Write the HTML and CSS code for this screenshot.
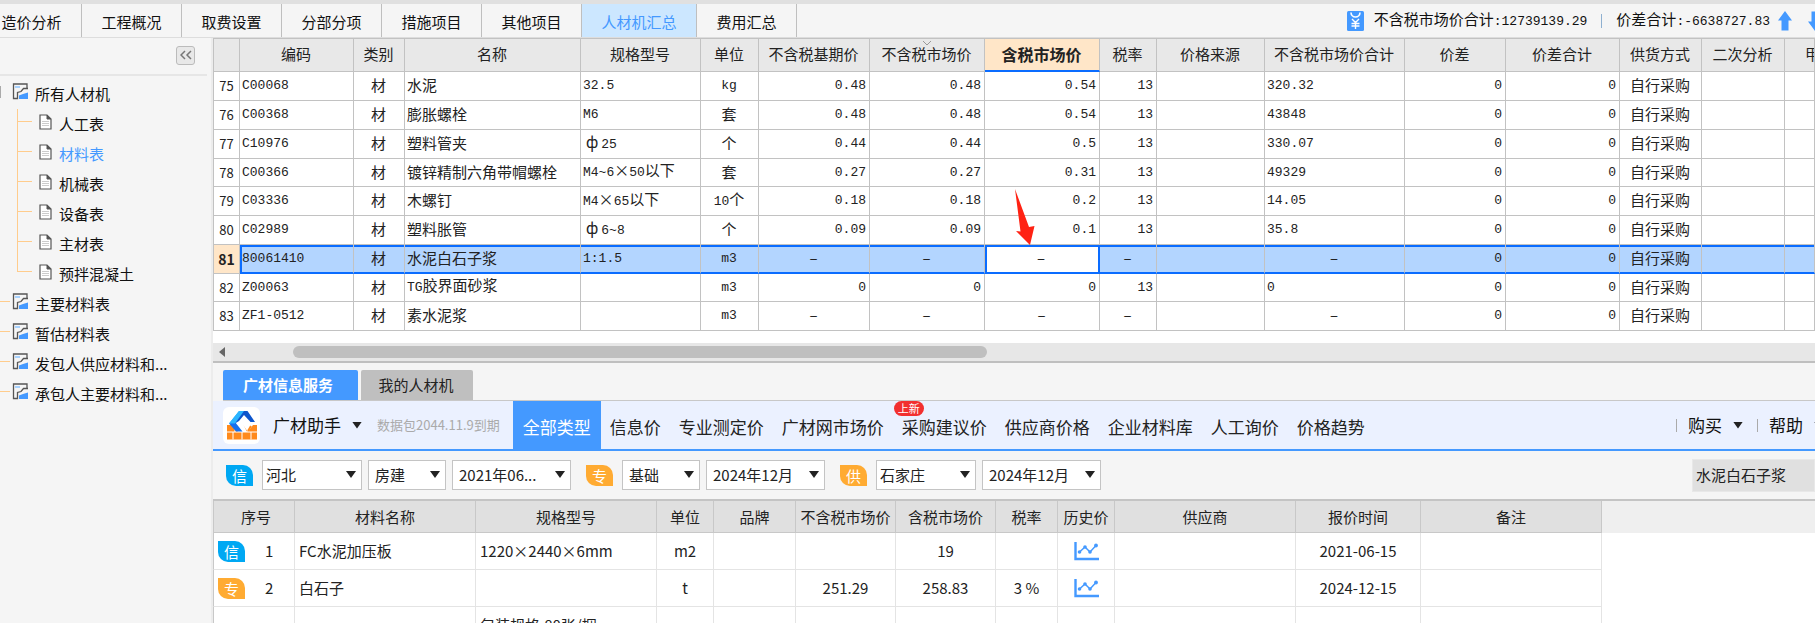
FILE: index.html
```html
<!DOCTYPE html>
<html lang="zh-CN">
<head>
  <meta charset="UTF-8">
  <meta name="viewport" content="width=device-width, initial-scale=1.0">
  <title>人材机汇总</title>
  <link rel="stylesheet" href="styles.css">
</head>
<body>
  <svg class="defs" aria-hidden="true">
    <symbol id="icon-group" viewBox="0 0 17 17">
      <path d="M4 15.500H1.500V1H15V5" fill="none" stroke="#555" stroke-width="1.300"/>
      <path d="M3 4h5" stroke="#8cc4ff" stroke-width="1.500"/>
      <path d="M16 5.500H11.500L9 8.500L5.500 9.500V15.500H4" fill="none" stroke="#555" stroke-width="1.300"/>
      <path d="M7 16V12.500L11 11L16 9.500V16Z" fill="#4499ff"/>
    </symbol>
    <symbol id="icon-file" viewBox="0 0 13 16">
      <path d="M1 1H8L12 5V15H1Z" fill="#fff" stroke="#555" stroke-width="1.200"/>
      <path d="M8 1V5H12Z" fill="#555" stroke="#555"/>
      <path d="M3 7.500h7M3 9.500h7M3 11.500h7" stroke="#ccc"/>
    </symbol>
    <symbol id="icon-chart" viewBox="0 0 25 19">
      <path d="M1.500 0V17H25" fill="none" stroke="#4499ff" stroke-width="2.400"/>
      <path d="M5.500 10L11 5L16 10L22 3.500" fill="none" stroke="#4499ff" stroke-width="1.500"/>
      <g fill="#4499ff"><circle cx="5.500" cy="10" r="1.800"/><circle cx="11" cy="5" r="1.800"/><circle cx="16" cy="10" r="1.800"/><circle cx="22" cy="3.500" r="1.900"/></g>
    </symbol>
    <symbol id="icon-up" viewBox="0 0 14 20">
      <path d="M7 0L14 9.500H10.500V19.500H3.500V9.500H0Z" fill="#4499ff"/>
    </symbol>
  </svg>

  <header class="topbar">
    <nav class="main-tabs">
      <button>造价分析</button>
      <button>工程概况</button>
      <button>取费设置</button>
      <button>分部分项</button>
      <button>措施项目</button>
      <button>其他项目</button>
      <button class="active">人材机汇总</button>
      <button>费用汇总</button>
    </nav>
    <div class="summary">
      <svg width="17" height="20" viewBox="0 0 17 20"><rect width="17" height="20" rx="1.500" fill="#4499ff"/><path d="M4 1.500A4.500 4.500 0 0 0 13 1.500" fill="none" stroke="#fff" stroke-width="1.600"/><path d="M5 8L8.500 11.500L12 8M8.500 11.500V18M4.500 12.500H12.500M4.500 15H12.500" fill="none" stroke="#fff" stroke-width="1.400"/></svg>
      <span>不含税市场价合计<span class="mono">:12739139.29</span></span>
      <i class="sep"></i>
      <span>价差合计<span class="mono">:-6638727.83</span></span>
      <button class="move" aria-label="上移"><svg width="14" height="20"><use href="#icon-up"/></svg></button>
      <button class="move down" aria-label="下移"><svg width="14" height="20"><use href="#icon-up"/></svg></button>
    </div>
  </header>

  <div class="workspace">
    <aside class="sidebar">
      <div class="side-head">
        <button class="collapse" aria-label="收起"><svg width="12" height="10" viewBox="0 0 12 10"><path d="M5 1L1 5L5 9M11 1L7 5L11 9" fill="none" stroke="#777" stroke-width="1.500"/></svg></button>
      </div>
      <ul class="tree">
        <li class="root open"><a href="#"><svg width="17" height="17"><use href="#icon-group"/></svg>所有人材机</a>
          <ul>
            <li><a href="#"><svg width="13" height="16"><use href="#icon-file"/></svg>人工表</a></li>
            <li class="current"><a href="#"><svg width="13" height="16"><use href="#icon-file"/></svg>材料表</a></li>
            <li><a href="#"><svg width="13" height="16"><use href="#icon-file"/></svg>机械表</a></li>
            <li><a href="#"><svg width="13" height="16"><use href="#icon-file"/></svg>设备表</a></li>
            <li><a href="#"><svg width="13" height="16"><use href="#icon-file"/></svg>主材表</a></li>
            <li><a href="#"><svg width="13" height="16"><use href="#icon-file"/></svg>预拌混凝土</a></li>
          </ul>
        </li>
        <li class="root"><a href="#"><svg width="17" height="17"><use href="#icon-group"/></svg>主要材料表</a></li>
        <li class="root"><a href="#"><svg width="17" height="17"><use href="#icon-group"/></svg>暂估材料表</a></li>
        <li class="root"><a href="#"><svg width="17" height="17"><use href="#icon-group"/></svg>发包人供应材料和...</a></li>
        <li class="root"><a href="#"><svg width="17" height="17"><use href="#icon-group"/></svg>承包人主要材料和...</a></li>
      </ul>
    </aside>

    <main class="content">
      <section class="grid-wrap">
        <table class="grid">
          <colgroup>
            <col class="g-idx"><col class="g-code"><col class="g-type"><col class="g-name"><col class="g-spec"><col class="g-unit"><col class="g-base"><col class="g-price"><col class="g-price"><col class="g-rate"><col class="g-src"><col class="g-total"><col class="g-diff"><col class="g-dsum"><col class="g-mode"><col class="g-again"><col>
          </colgroup>
          <thead>
            <tr>
              <th></th><th>编码</th><th>类别</th><th>名称</th><th>规格型号</th><th>单位</th><th>不含税基期价</th>
              <th class="sorted">不含税市场价<svg width="10" height="6" viewBox="0 0 10 6"><path d="M1 1L5 5L9 1" fill="none" stroke="#999"/></svg></th>
              <th class="focus">含税市场价</th><th>税率</th><th>价格来源</th><th>不含税市场价合计</th><th>价差</th><th>价差合计</th><th>供货方式</th><th>二次分析</th><th class="cut">甲</th>
            </tr>
          </thead>
          <tbody>
            <tr><th>75</th><td class="l n">C00068</td><td>材</td><td class="l">水泥</td><td class="l n">32.5</td><td class="n">kg</td><td class="r n">0.48</td><td class="r n">0.48</td><td class="r n">0.54</td><td class="r n">13</td><td></td><td class="l n">320.32</td><td class="r n">0</td><td class="r n">0</td><td>自行采购</td><td></td><td></td></tr>
            <tr><th>76</th><td class="l n">C00368</td><td>材</td><td class="l">膨胀螺栓</td><td class="l n">M6</td><td>套</td><td class="r n">0.48</td><td class="r n">0.48</td><td class="r n">0.54</td><td class="r n">13</td><td></td><td class="l n">43848</td><td class="r n">0</td><td class="r n">0</td><td>自行采购</td><td></td><td></td></tr>
            <tr><th>77</th><td class="l n">C10976</td><td>材</td><td class="l">塑料管夹</td><td class="l"><span class="phi">ф</span><span class="mono">25</span></td><td>个</td><td class="r n">0.44</td><td class="r n">0.44</td><td class="r n">0.5</td><td class="r n">13</td><td></td><td class="l n">330.07</td><td class="r n">0</td><td class="r n">0</td><td>自行采购</td><td></td><td></td></tr>
            <tr><th>78</th><td class="l n">C00366</td><td>材</td><td class="l">镀锌精制六角带帽螺栓</td><td class="l"><span class="mono">M4~6</span>×<span class="mono">50</span>以下</td><td>套</td><td class="r n">0.27</td><td class="r n">0.27</td><td class="r n">0.31</td><td class="r n">13</td><td></td><td class="l n">49329</td><td class="r n">0</td><td class="r n">0</td><td>自行采购</td><td></td><td></td></tr>
            <tr><th>79</th><td class="l n">C03336</td><td>材</td><td class="l">木螺钉</td><td class="l"><span class="mono">M4</span>×<span class="mono">65</span>以下</td><td><span class="mono">10</span>个</td><td class="r n">0.18</td><td class="r n">0.18</td><td class="r n">0.2</td><td class="r n">13</td><td></td><td class="l n">14.05</td><td class="r n">0</td><td class="r n">0</td><td>自行采购</td><td></td><td></td></tr>
            <tr><th>80</th><td class="l n">C02989</td><td>材</td><td class="l">塑料胀管</td><td class="l"><span class="phi">ф</span><span class="mono">6~8</span></td><td>个</td><td class="r n">0.09</td><td class="r n">0.09</td><td class="r n">0.1</td><td class="r n">13</td><td></td><td class="l n">35.8</td><td class="r n">0</td><td class="r n">0</td><td>自行采购</td><td></td><td></td></tr>
            <tr class="selected"><th>81</th><td class="l n">80061410</td><td>材</td><td class="l">水泥白石子浆</td><td class="l n">1:1.5</td><td class="n">m3</td><td>–</td><td>–</td><td class="editing">–<svg class="pointer" width="20" height="56" viewBox="0 0 20 56"><path d="M0 0L14 38L19.500 37L15 56L1 42L5.500 42.500Z" fill="#ff2213"/></svg></td><td>–</td><td></td><td>–</td><td class="r n">0</td><td class="r n">0</td><td>自行采购</td><td></td><td></td></tr>
            <tr><th>82</th><td class="l n">Z00063</td><td>材</td><td class="l"><span class="mono">TG</span>胶界面砂浆</td><td></td><td class="n">m3</td><td class="r n">0</td><td class="r n">0</td><td class="r n">0</td><td class="r n">13</td><td></td><td class="l n">0</td><td class="r n">0</td><td class="r n">0</td><td>自行采购</td><td></td><td></td></tr>
            <tr><th>83</th><td class="l n">ZF1-0512</td><td>材</td><td class="l">素水泥浆</td><td></td><td class="n">m3</td><td>–</td><td>–</td><td>–</td><td>–</td><td></td><td>–</td><td class="r n">0</td><td class="r n">0</td><td>自行采购</td><td></td><td></td></tr>
          </tbody>
        </table>
        <div class="scrollbar">
          <svg width="6" height="10" viewBox="0 0 6 10"><path d="M6 0V10L0 5Z" fill="#666"/></svg>
          <div class="thumb"></div>
        </div>
      </section>

      <section class="service">
        <div class="service-tabs">
          <button class="active">广材信息服务</button>
          <button>我的人材机</button>
        </div>

        <div class="toolbar">
          <div class="logo">
            <svg width="30" height="29" viewBox="0 0 30 29">
              <path d="M0 14H30V28.500H0Z" fill="#ff8a1c"/>
              <path d="M0 21H30M8 14V21M15 21V28.500M6 21V28.500M24 21V28.500" stroke="#fff" fill="none"/>
              <path d="M16 14L21 21L26 14V11H12Z" fill="#fff"/>
              <path d="M6 12.500H16L20 21H11Z" fill="#fff"/>
              <path d="M21 20L24 15" stroke="#ff8a1c" stroke-width="2"/>
              <path d="M12 0H18L8 12.500L2 12.500Z" fill="#2bb4ff"/>
              <path d="M2 12.500L8 11L15.500 20.500H9Z" fill="#1670ee"/>
              <path d="M13.500 0H20.500L28 11H23.500L17 4L12 10L8 12.500Z" fill="#0d55cc"/>
              <path d="M12 0H17L8 12.500L2 12.500Z" fill="#2bb4ff"/>
            </svg>
          </div>
          <button class="assist">广材助手<i class="caret"></i></button>
          <span class="expire">数据包2044.11.9到期</span>
          <nav class="types">
            <button class="active">全部类型</button>
            <button>信息价</button>
            <button>专业测定价</button>
            <button>广材网市场价</button>
            <button>采购建议价<em>上新</em></button>
            <button>供应商价格</button>
            <button>企业材料库</button>
            <button>人工询价</button>
            <button>价格趋势</button>
          </nav>
          <div class="links">
            <button>购买<i class="caret"></i></button>
            <button>帮助<i class="caret"></i></button>
          </div>
        </div>

        <form class="filters">
          <div class="filter-group">
            <span class="tag info">信</span>
            <label class="pick"><select class="wide" aria-label="地区"><option>河北</option></select></label>
            <label class="pick"><select class="short" aria-label="专业"><option>房建</option></select></label>
            <label class="pick"><select class="month" aria-label="信息价期数"><option>2021年06...</option></select></label>
          </div>
          <div class="filter-group">
            <span class="tag">专</span>
            <label class="pick"><select class="short" aria-label="测定价类别"><option>基础</option></select></label>
            <label class="pick"><select class="month" aria-label="测定价期数"><option>2024年12月</option></select></label>
          </div>
          <div class="filter-group">
            <span class="tag">供</span>
            <label class="pick"><select class="wide" aria-label="城市"><option>石家庄</option></select></label>
            <label class="pick"><select class="month" aria-label="供应商期数"><option>2024年12月</option></select></label>
          </div>
          <input class="search" type="text" aria-label="搜索材料" value="水泥白石子浆">
        </form>

        <table class="prices">
          <colgroup>
            <col class="p-no"><col class="p-long"><col class="p-long"><col class="p-unit"><col class="p-no"><col class="p-price"><col class="p-price"><col class="p-rate"><col class="p-unit"><col class="p-long"><col class="p-date"><col class="p-long"><col>
          </colgroup>
          <thead>
            <tr><th>序号</th><th>材料名称</th><th>规格型号</th><th>单位</th><th>品牌</th><th>不含税市场价</th><th>含税市场价</th><th>税率</th><th>历史价</th><th>供应商</th><th>报价时间</th><th>备注</th><th class="rest"></th></tr>
          </thead>
          <tbody>
            <tr><td><div class="no"><span class="tag info">信</span>1</div></td><td class="l">FC水泥加压板</td><td class="l">1220×2440×6mm</td><td>m2</td><td></td><td></td><td>19</td><td></td><td><svg width="25" height="19"><use href="#icon-chart"/></svg></td><td></td><td>2021-06-15</td><td></td><td class="rest"></td></tr>
            <tr><td><div class="no"><span class="tag">专</span>2</div></td><td class="l">白石子</td><td></td><td>t</td><td></td><td>251.29</td><td>258.83</td><td>3 %</td><td><svg width="25" height="19"><use href="#icon-chart"/></svg></td><td></td><td>2024-12-15</td><td></td><td class="rest"></td></tr>
            <tr><td></td><td></td><td class="l">包装规格:80张/捆</td><td></td><td></td><td></td><td></td><td></td><td></td><td></td><td></td><td></td><td class="rest"></td></tr>
          </tbody>
        </table>
      </section>
    </main>
  </div>
</body>
</html>
```
FILE: styles.css
```css
* {
  box-sizing: border-box;
}

body {
  margin: 0;
  height: 100vh;
  overflow: hidden;
  display: flex;
  flex-direction: column;
  font-family: "Noto Sans CJK SC", sans-serif;
  font-size: 15px;
  line-height: 20px;
  color: #222;
  background: #f5f5f5;
}

button, input, select {
  font: inherit;
  color: inherit;
  border: none;
  border-radius: 0;
  background: none;
  padding: 0;
  margin: 0;
}

button {
  cursor: pointer;
  white-space: nowrap;
}

a {
  color: inherit;
  text-decoration: none;
}

svg {
  display: block;
  flex: none;
}

.defs {
  position: absolute;
  width: 0;
  height: 0;
}

.mono, .n {
  font-family: "Liberation Mono", monospace;
  font-size: 13px;
}

/* top bar */
.topbar {
  display: flex;
  justify-content: space-between;
  height: 38px;
  border-top: 4px solid #e0e0e0;
  border-bottom: 1px solid #ddd;
  flex: none;
}

.main-tabs {
  display: flex;
  margin-left: -18px;
}

.main-tabs button {
  width: 100px;
  padding-top: 2px;
  border-right: 1px solid #bfbfbf;
  color: #111;
}

.main-tabs button.active {
  width: 115px;
  background: #cce7ff;
  color: #4499ff;
}

.summary {
  display: flex;
  align-items: center;
  margin-right: -7px;
  color: #111;
  white-space: nowrap;
}

.summary > svg {
  margin-right: 10px;
}

.sep {
  width: 1px;
  height: 14px;
  margin: 0 14px;
  background: #8fb0d0;
}

.move {
  margin-left: 8px;
}

.move.down {
  margin-left: 16px;
  transform: rotate(180deg);
}

/* left tree */
.workspace {
  display: flex;
  flex: 1;
  min-height: 0;
}

.sidebar {
  width: 213px;
  flex: none;
  border-right: 2px solid #ececec;
}

.side-head {
  display: flex;
  justify-content: flex-end;
  align-items: center;
  height: 38px;
  margin-right: 4px;
  padding: 0 12px 2px 0;
  border-bottom: 2px solid #e6e6e6;
}

.collapse {
  display: flex;
  align-items: center;
  justify-content: center;
  width: 19px;
  height: 19px;
  border: 1px solid #bbb;
  border-radius: 3px;
  background: #e8e8e8;
}

.tree, .tree ul {
  list-style: none;
  margin: 0;
  padding: 0;
}

.tree {
  padding-top: 3px;
  color: #111;
}

.tree a {
  display: flex;
  align-items: center;
  gap: 6px;
  height: 30px;
  padding-left: 13px;
}

.tree a::before {
  content: "";
  width: 10px;
  height: 1px;
  margin: 0 -4px 5px -13px;
  background: #ffcc8c;
}

.tree a svg {
  margin-bottom: 5px;
}

.tree .open > a::before {
  width: 1px;
  height: 12px;
  margin-right: 5px;
  background: #aaa;
}

.tree ul {
  margin-left: 17px;
  background: linear-gradient(#ffcc8c, #ffcc8c) no-repeat 0 0 / 1px calc(100% - 17px);
}

.tree ul a {
  gap: 7px;
  padding-left: 0;
}

.tree ul a::before {
  width: 15px;
  margin: 0 0 5px;
}

.current {
  color: #4499ff;
}

/* material grid */
.content {
  flex: 1;
  min-width: 0;
  display: flex;
  flex-direction: column;
}

table {
  width: 100%;
  table-layout: fixed;
  border-collapse: separate;
  border-spacing: 0;
}

th, td {
  padding: 0 3px;
  text-align: center;
  font-weight: normal;
  white-space: nowrap;
}

.l {
  text-align: left;
}

.r {
  text-align: right;
}

.grid-wrap {
  flex: none;
  background: #fff;
  border-bottom: 2px solid #bfbfbf;
}

.grid th, .grid td {
  height: 29px;
  padding: 0 3px 2px 2px;
  border-right: 1px solid #c2c2c2;
  border-bottom: 1px solid #c2c2c2;
}

.grid td.n {
  padding-bottom: 0;
}

.grid tbody tr:nth-child(4n) > * {
  height: 28px;
}

.grid thead th {
  height: 34px;
  border-top: 1px solid #c2c2c2;
  background: #e8e8e8;
}

.grid th:first-child {
  border-left: 1px solid #c2c2c2;
}

.grid tbody th {
  padding: 0;
  font-size: 13px;
}

.grid thead .sorted {
  position: relative;
}

.sorted svg {
  position: absolute;
  top: 1px;
  left: calc(50% - 5px);
}

.grid thead .focus {
  font-size: 16px;
  font-weight: bold;
  background: #ffe6c8;
  border-bottom: 2px solid #0a6cff;
}

.grid thead .cut {
  padding-left: 20px;
  text-align: left;
  overflow: hidden;
}

.phi {
  padding: 0 3px;
}

.grid .selected th {
  font-size: 14px;
  font-weight: bold;
  background: #ffe6c8;
}

.grid .selected td {
  background: #b3d5ff;
  border-bottom: 2px solid #0a6cff;
  box-shadow: inset 0 2px #0a6cff;
}

.grid .selected th + td {
  box-shadow: inset 2px 2px #0a6cff;
}

.grid .selected .editing {
  position: relative;
  background: #fff;
  border-right: 2px solid #0a6cff;
  box-shadow: inset 2px 2px #0a6cff;
}

.pointer {
  position: absolute;
  left: 30px;
  bottom: 100%;
}

.g-idx { width: 27px; }
.g-code { width: 114px; }
.g-type { width: 51px; }
.g-name { width: 176px; }
.g-spec { width: 120px; }
.g-unit { width: 58px; }
.g-base { width: 111px; }
.g-price { width: 115px; }
.g-rate { width: 57px; }
.g-src { width: 108px; }
.g-total { width: 140px; }
.g-diff { width: 101px; }
.g-dsum { width: 114px; }
.g-mode { width: 82px; }
.g-again { width: 83px; }

.scrollbar {
  display: flex;
  align-items: center;
  height: 18px;
  margin-top: 12px;
  padding-left: 6px;
  background: #e7e7e7;
}

.thumb {
  width: 43.5%;
  height: 12px;
  margin-left: 68px;
  border-radius: 6px;
  background: #bfbfbf;
}

/* price service panel */
.service {
  flex: 1;
  min-height: 0;
  overflow: hidden;
}

.service-tabs {
  display: flex;
  gap: 3px;
  margin-left: 10px;
  padding-top: 7px;
  border-bottom: 1px solid #c8c8c8;
}

.service-tabs button {
  height: 30px;
  width: 112px;
  padding: 0 2px 1px 0;
  border-radius: 2px 2px 0 0;
  background: #bfbfbf;
}

.service-tabs .active {
  width: 135px;
  padding-right: 5px;
  background: #4499ff;
  color: #fff;
  font-weight: bold;
}

.toolbar {
  display: flex;
  align-items: center;
  height: 50px;
  padding-left: 10px;
  border-bottom: 2px solid #4499ff;
  background: #ebf1ff;
  font-size: 17px;
}

.logo {
  display: flex;
  align-items: center;
  justify-content: center;
  width: 37px;
  height: 37px;
  border-radius: 6px;
  background: #fff;
}

.caret {
  width: 10px;
  height: 7px;
  background: #222;
  clip-path: polygon(0 0, 100% 0, 50% 100%);
}

.assist, .links button {
  display: flex;
  align-items: center;
  gap: 11px;
  color: #111;
}

.assist {
  margin-left: 13px;
}

.expire {
  margin-left: 15px;
  font-size: 13px;
  color: #aaa;
}

.types {
  display: flex;
  align-self: stretch;
  margin-left: 13px;
}

.types button {
  position: relative;
  padding: 3px 9px 0;
}

.types .active {
  padding: 3px 10px 0;
  background: #4499ff;
  color: #fff;
}

.types em {
  position: absolute;
  top: 0;
  left: 1px;
  width: 30px;
  border-radius: 8px;
  background: #f23030;
  color: #fff;
  font-size: 11px;
  font-style: normal;
  line-height: 15px;
}

.links {
  display: flex;
  margin-left: auto;
  margin-right: -9px;
}

.links button::before {
  content: "";
  width: 1px;
  height: 13px;
  background: #aaa;
}

.links button + button {
  margin-left: 14px;
}

.filters {
  display: flex;
  align-items: center;
  gap: 15px;
  height: 48px;
  padding-left: 13px;
}

.filter-group {
  display: flex;
  align-items: center;
  gap: 6px;
}

.tag {
  flex: none;
  width: 27px;
  height: 21px;
  border-radius: 0 10px 0 10px;
  background: #ffab32;
  color: #fff;
  line-height: 21px;
  text-align: center;
}

.tag.info {
  background: #00a8f3;
}

.filter-group .tag {
  margin-right: 3px;
}

.pick {
  position: relative;
  display: flex;
}

.pick::after {
  content: "";
  position: absolute;
  top: 11px;
  right: 6px;
  width: 10px;
  height: 7px;
  background: #222;
  clip-path: polygon(0 0, 100% 0, 50% 100%);
  pointer-events: none;
}

.pick select {
  appearance: none;
  height: 30px;
  padding: 0 0 1px 6px;
  border: 1px solid #c4c4c4;
  background: #fff;
}

.pick .wide {
  width: 100px;
  padding-left: 3px;
}

.pick .short {
  width: 78px;
}

.pick .month {
  width: 119px;
}

.search {
  width: 123px;
  height: 33px;
  margin-left: auto;
  padding: 0 0 2px 3px;
  border: 1px solid #e8e8e8;
  background: #e0e0e0;
}

.prices {
  border-top: 2px solid #c4c4c4;
  background: #fff;
}

.prices th {
  height: 32px;
  border-right: 1px solid #c8c8c8;
  border-bottom: 1px solid #c8c8c8;
  background: #e0e0e0;
  padding: 0;
}

.prices td {
  height: 37px;
  border-right: 1px solid #e4e4e4;
  border-bottom: 1px solid #e4e4e4;
}

.prices tr > :first-child {
  padding-left: 4px;
  border-left: 1px solid #c8c8c8;
}

.prices td.l {
  padding-left: 4px;
}

.prices .rest {
  border: none;
}

.prices th.rest {
  background: #efefef;
}

.prices td svg {
  margin: 0 auto;
}

.no {
  display: flex;
  align-items: center;
  gap: 20px;
}

.p-no { width: 82px; }
.p-long { width: 181px; }
.p-unit { width: 57px; }
.p-price { width: 100px; }
.p-rate { width: 62px; }
.p-date { width: 125px; }
```
